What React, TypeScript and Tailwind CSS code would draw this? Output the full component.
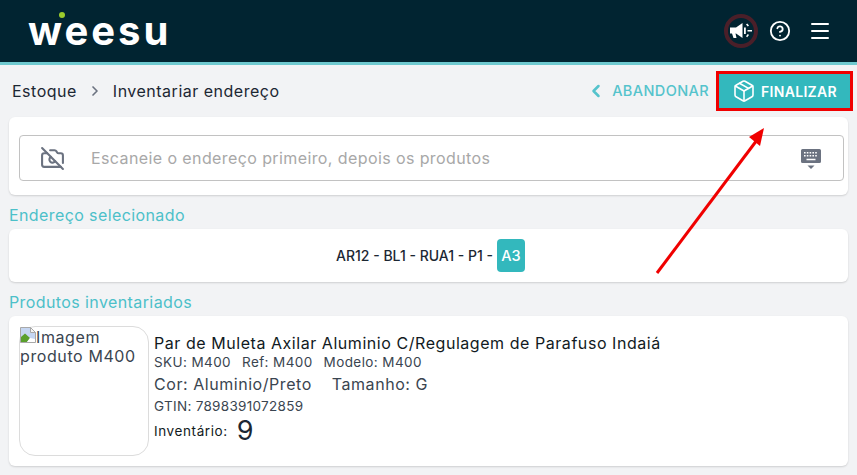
import { ChevronLeft, ChevronRight, CircleHelp, CameraOff, Menu, Package } from 'lucide-react'

function Megaphone() {
  return (
    <svg width="24" height="20" viewBox="0 0 24 20" fill="#fff">
      <path d="M1 6.500h6l6.500-4.500v15L7 12.500h-.5l1 4.500H4.500L3 12.500H1z" />
      <path d="M15 6.500h1.800v6.500H15z" />
      <path d="M18.500 9h4.500v1.600h-4.500zM17 3.400l1.200-1 1.800 2.200-1.200 1zM17 15.200l1.200 1 1.800-2.200-1.200-1z" />
    </svg>
  )
}

function KeyboardDown() {
  return (
    <svg width="20" height="22" viewBox="0 0 20 22" fill="#6b7280" className="mt-[3px]">
      <path d="M1.500 0h17A1.500 1.500 0 0 1 20 1.500v11a1.500 1.500 0 0 1-1.500 1.500h-17A1.500 1.500 0 0 1 0 12.500v-11A1.500 1.500 0 0 1 1.500 0z" />
      <path fill="#fff" d="M3 3h1.600v1.600H3zM5.800 3h1.600v1.600H5.800zM8.600 3h1.600v1.600H8.600zM11.400 3H13v1.600h-1.600zM14.200 3h1.600v1.600h-1.600zM3 6h1.600v1.600H3zM5.800 6h1.600v1.600H5.800zM8.600 6h1.600v1.600H8.600zM11.400 6H13v1.600h-1.600zM14.200 6h1.600v1.600h-1.600zM5.500 9.700h9v1.600h-9z" />
      <path d="M6.500 16.500h7L10 20z" />
    </svg>
  )
}

function BrokenImage() {
  return (
    <svg width="16" height="16" viewBox="0 0 16 16" className="shrink-0">
      <path d="M.5.500h10l5 5v10H.5z" fill="#c5d6f2" stroke="#a8a8a8" />
      <path d="M10.500.500v5h5z" fill="#f4f4f4" stroke="#a8a8a8" />
      <path d="M1 15v-5l4-3.500 5 4.500-3 4z" fill="#5aa02c" />
      <path d="M7 15l3-4 5 1v3z" fill="#fff" />
    </svg>
  )
}

export default function App() {
  return (
    <div className="relative h-[475px] w-[857px] overflow-hidden bg-[#f2f3f5] font-['Inter',sans-serif] text-[#1c2733]">
      {/* Top header */}
      <header className="flex h-[65px] items-center justify-between border-b-[3px] border-[#6fc9cf] bg-[#012431] pl-7 pr-[25px]">
        <div className="relative">
          <span className="text-[40px] leading-none font-bold tracking-[3px] text-white">weesu</span>
          <span className="absolute left-[31px] top-[1px] size-[6px] rounded-full bg-[#9ccb2c]" />
        </div>
        <div className="flex items-center gap-[10px]">
          <div className="mr-[1px] flex size-[34px] items-center justify-center rounded-full border-[4px] border-[#4a1f29]">
            <Megaphone />
          </div>
          <CircleHelp className="size-[22px] text-white" strokeWidth={2} />
          <Menu className="ml-[7px] size-[24px] text-white" strokeWidth={2} />
        </div>
      </header>

      {/* Breadcrumb + actions */}
      <div className="flex h-[52px] items-center justify-between pl-3 pr-1">
        <div className="flex items-center text-[16px] tracking-[0.500px]">
          <span>Estoque</span>
          <ChevronRight className="mx-[10px] size-[16px] text-[#6b7280]" strokeWidth={2.500} />
          <span>Inventariar endereço</span>
        </div>
        <div className="flex items-center">
          <ChevronLeft className="size-[20px] text-[#55c3cc]" strokeWidth={3} />
          <span className="ml-[6px] mr-[7px] text-[14.500px] font-medium tracking-[0.400px] text-[#55c3cc]">ABANDONAR</span>
          <button className="flex h-[40px] w-[137px] items-center justify-center gap-[5px] border-[3px] border-[#f00000] bg-[#33b8bd] text-[14px] font-semibold tracking-[0.300px] text-white">
            <Package className="size-[24px]" strokeWidth={1.600} />
            FINALIZAR
          </button>
        </div>
      </div>

      <main className="px-[9px]">
        {/* Scan card */}
        <section className="rounded-md bg-white pl-[10px] pr-[4px] pt-[18px] pb-[14px] shadow-[0_1px_2px_rgba(0,0,0,0.15)]">
          <div className="flex h-[46px] items-center rounded border border-[#c2c2c2] pl-[20px] pr-[22px]">
            <CameraOff className="size-[25px] text-[#6b7280]" strokeWidth={2} />
            <span className="ml-[26px] flex-1 text-[16px] tracking-[0.400px] text-[#a8a8a8]">Escaneie o endereço primeiro, depois os produtos</span>
            <KeyboardDown />
          </div>
        </section>

        <h2 className="mt-[11px] mb-[4px] text-[16px] leading-[19px] tracking-[0.400px] text-[#4cc0c9]">Endereço selecionado</h2>

        {/* Selected address */}
        <section className="flex h-[53px] items-center justify-center gap-[4px] rounded-md bg-white pl-[4px] text-[14px] font-medium shadow-[0_1px_2px_rgba(0,0,0,0.15)]">
          <span>AR12 - BL1 - RUA1 - P1 -</span>
          <span className="flex h-[33px] w-[28px] items-center justify-center rounded bg-[#33b8bd] text-[14.500px] text-white">A3</span>
        </section>

        <h2 className="mt-[11px] mb-[4px] text-[16px] leading-[19px] tracking-[0.400px] text-[#4cc0c9]">Produtos inventariados</h2>

        {/* Product card */}
        <section className="flex h-[150px] gap-[5px] rounded-md bg-white p-[10px] shadow-[0_1px_2px_rgba(0,0,0,0.15)]">
          <div className="h-[130px] w-[130px] shrink-0 rounded-[16px] border border-[#dcdcdc]">
            <BrokenImage />
            <p className="mt-[-15px] indent-[16px] text-[16px] leading-[19px] tracking-[0.600px] text-[#3a4550]">Imagem produto M400</p>
          </div>
          <div className="pt-[7px]">
            <h3 className="text-[16px] leading-[20px] tracking-[0.550px] text-[#111a22]">Par de Muleta Axilar Aluminio C/Regulagem de Parafuso Indaiá</h3>
            <div className="flex gap-[11px] text-[13.500px] leading-[18px] tracking-[0.400px] text-[#3a4550]">
              <span>SKU: M400</span>
              <span>Ref: M400</span>
              <span>Modelo: M400</span>
            </div>
            <div className="mt-[3px] flex gap-[20px] text-[16px] leading-[20px] tracking-[0.550px] text-[#3a4550]">
              <span>Cor: Aluminio/Preto</span>
              <span>Tamanho: G</span>
            </div>
            <p className="mt-[3px] text-[13.500px] leading-[18px] tracking-[0.300px] text-[#3a4550]">GTIN: 7898391072859</p>
            <div className="mt-[1px] flex items-center gap-[9px]">
              <span className="text-[13.500px] tracking-[0.600px] text-[#111a22]">Inventário:</span>
              <span className="text-[27px] leading-[30px]">9</span>
            </div>
          </div>
        </section>
      </main>

      {/* Red annotation arrow */}
      <svg className="pointer-events-none absolute left-0 top-0" width="857" height="475">
        <line x1="657" y1="273" x2="757" y2="140" stroke="#f00000" strokeWidth="3" />
        <polygon points="764,128 749,137 760,146" fill="#f00000" />
      </svg>
    </div>
  )
}
